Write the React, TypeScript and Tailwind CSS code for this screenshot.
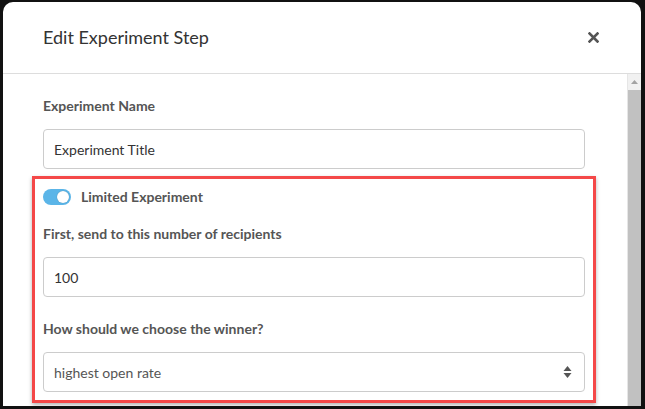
import React from "react";

const font = { fontFamily: "Lato, 'Noto Sans', sans-serif" };

const Label = ({ children }: { children: React.ReactNode }) => (
  <div className="text-[14px] leading-[18px] font-bold text-[#555]">{children}</div>
);

const TextBox = ({ value }: { value: string }) => (
  <div className="h-[40px] rounded-[4px] border border-[#ccc] bg-white px-[10px] flex items-center text-[14px] text-[#333]">
    {value}
  </div>
);

const Toggle = () => (
  <div className="relative w-[28px] h-[16px] rounded-full bg-[#5bb5e8]">
    <div className="absolute right-[2px] top-[2px] w-[12px] h-[12px] rounded-full bg-white shadow-[0_0_1px_rgba(0,0,0,0.3)]" />
  </div>
);

const SelectArrows = () => (
  <svg width="9" height="14" viewBox="0 0 9 14">
    <path d="M4.5 1 L8.5 6 L0.5 6 Z" fill="#555" />
    <path d="M4.5 13 L8.5 8 L0.5 8 Z" fill="#555" />
  </svg>
);

const CloseIcon = () => (
  <svg width="11" height="11" viewBox="0 0 11 11">
    <path d="M1.5 1.5 L9.5 9.5 M9.5 1.5 L1.5 9.5" stroke="#555" strokeWidth="2.6" strokeLinecap="square" />
  </svg>
);

export default function App() {
  return (
    <div className="w-[645px] h-[409px] bg-[#111] pt-[2px] pl-[3px] pr-[4px] pb-[3px] overflow-hidden" style={font}>
      <div className="h-full bg-white rounded-t-[10px] flex flex-col overflow-hidden">
        {/* header */}
        <div className="h-[72px] shrink-0 border-b border-[#ddd] flex items-center justify-between pl-[40px] pr-[42px]">
          <div className="text-[18px] text-[#333]">Edit Experiment Step</div>
          <CloseIcon />
        </div>
        {/* body */}
        <div className="flex flex-1 min-h-0">
          <div className="flex-1 pl-[40px] pr-[42px] pt-[23px] flex flex-col">
            <Label>Experiment Name</Label>
            <div className="mt-[14px]">
              <TextBox value="Experiment Title" />
            </div>
            <div className="mt-[7px] -mx-[11px] border-[3px] border-[#f44848] shadow-[0_2px_4px_rgba(0,0,0,0.3)] px-[8px] pt-[10px] pb-[8px] flex flex-col">
              <div className="flex items-center gap-[10px] h-[16px]">
                <Toggle />
                <Label>Limited Experiment</Label>
              </div>
              <div className="mt-[20px]">
                <Label>First, send to this number of recipients</Label>
              </div>
              <div className="mt-[14px]">
                <TextBox value="100" />
              </div>
              <div className="mt-[23px]">
                <Label>How should we choose the winner?</Label>
              </div>
              <div className="mt-[14px] h-[40px] rounded-[4px] border border-[#ccc] bg-white pl-[10px] pr-[12px] flex items-center justify-between text-[14px] text-[#555]">
                <span>highest open rate</span>
                <SelectArrows />
              </div>
            </div>
          </div>
          {/* scrollbar */}
          <div className="w-[14px] shrink-0 bg-[#f1f1f1] border-l border-[#e6e6e6] flex flex-col">
            <div className="h-[16px] flex items-center justify-center">
              <svg width="7" height="4" viewBox="0 0 7 4">
                <path d="M3.5 0 L7 4 L0 4 Z" fill="#a3a3a3" />
              </svg>
            </div>
            <div className="flex-1 bg-[#c1c1c1]" />
          </div>
        </div>
      </div>
    </div>
  );
}
